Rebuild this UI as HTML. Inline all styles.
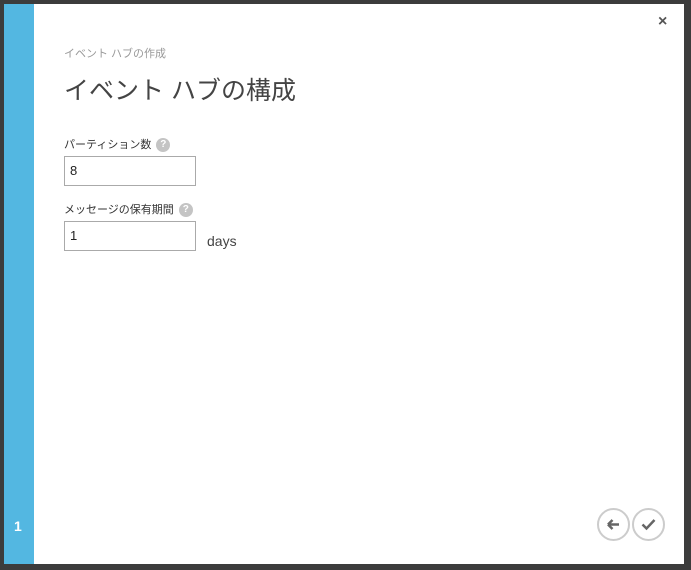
<!DOCTYPE html>
<html><head><meta charset="utf-8"><style>
body{margin:0;width:691px;height:570px;background:#3c3c3c;position:relative;overflow:hidden;font-family:"Liberation Sans","Noto Sans CJK JP",sans-serif}
.blue{position:absolute;left:4px;top:4px;width:30px;height:560px;background:#53b7e1}
.white{position:absolute;left:34px;top:4px;width:650px;height:560px;background:#fff}
.abs{position:absolute}
.sub{left:64px;top:45px;font-size:11px;color:#999}
.title{left:64px;top:71px;font-size:25px;color:#444}
.lbl{font-size:11px;color:#333}
.q{display:inline-block;width:14px;height:14px;border-radius:50%;background:#c4c4c4;color:#fff;font-size:10px;font-weight:bold;text-align:center;line-height:14px;vertical-align:middle;margin-left:5px}
.inp{width:132px;height:30px;border:1px solid #aaa;box-sizing:border-box;font-size:13px;color:#222;padding-left:5px;line-height:28px}
.circ{width:33px;height:33px;border:2px solid #ccc;border-radius:50%;box-sizing:border-box}
</style></head><body>
<div class="blue"></div><div class="white"></div>
<div class="abs" style="left:14px;top:518px;color:#fff;font-weight:bold;font-size:14px">1</div>
<div class="abs" style="left:658px;top:13px;color:#555;font-weight:bold;font-size:16px">×</div>
<div class="abs sub">イベント ハブの作成</div>
<div class="abs title">イベント ハブの構成</div>
<div class="abs lbl" style="left:64px;top:136px">パーティション数<span class="q">?</span></div>
<div class="abs inp" style="left:64px;top:156px">8</div>
<div class="abs lbl" style="left:64px;top:201px">メッセージの保有期間<span class="q">?</span></div>
<div class="abs inp" style="left:64px;top:221px">1</div>
<div class="abs" style="left:207px;top:233px;font-size:14px;color:#444">days</div>
<div class="abs circ" style="left:597px;top:508px"><svg width="29" height="29" viewBox="0 0 29 29"><path d="M9 14.5H20M9 14.5L13.5 10M9 14.5L13.5 19" stroke="#666" stroke-width="2.5" fill="none"/></svg></div>
<div class="abs circ" style="left:632px;top:508px"><svg width="29" height="29" viewBox="0 0 29 29"><path d="M8.5 14.5L12.5 18.5L20.5 10" stroke="#666" stroke-width="2.5" fill="none"/></svg></div>
</body></html>
